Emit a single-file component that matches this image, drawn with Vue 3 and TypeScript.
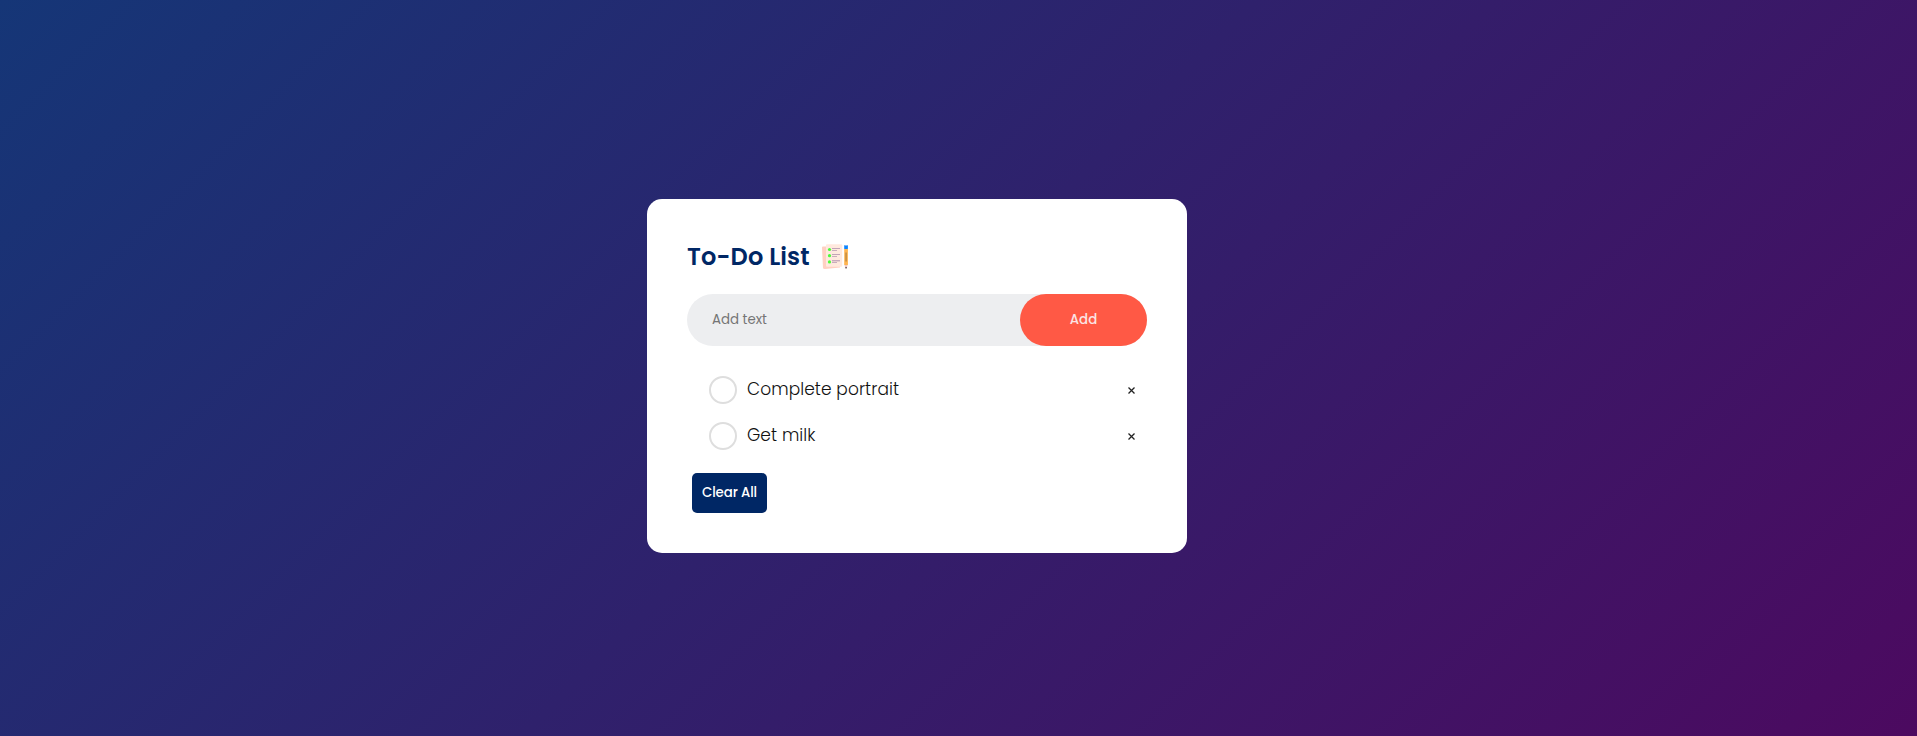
<script setup lang="ts">
import { ref } from 'vue'

interface Task {
  id: number
  text: string
  done: boolean
}

const draft = ref('')
const nextId = ref(3)
const tasks = ref<Task[]>([
  { id: 1, text: 'Complete portrait', done: false },
  { id: 2, text: 'Get milk', done: false },
])

function addTask(): void {
  const text = draft.value.trim()
  if (!text) return
  tasks.value.push({ id: nextId.value++, text, done: false })
  draft.value = ''
}

function removeTask(id: number): void {
  tasks.value = tasks.value.filter((task) => task.id !== id)
}

function clearAll(): void {
  tasks.value = []
}
</script>

<template>
  <main class="page">
    <section class="card">
      <h2 class="title">
        <span class="title-text">To-Do List</span>
        <svg class="title-icon" viewBox="0 0 27 26" aria-hidden="true">
          <path d="M0 3.5Q0 2.5 1 2.5H5V22H18V23.6L3 25Q1 25 1 24Z" fill="#ffd0c2" />
          <rect x="4" y="0.3" width="16.2" height="22.4" rx="1" fill="#ffe9de" />
          <g fill="#4dfb3a">
            <circle cx="7.5" cy="5.5" r="1.6" />
            <circle cx="7.5" cy="11.7" r="1.6" />
            <circle cx="7.5" cy="17.9" r="1.6" />
          </g>
          <g fill="#c2a5b8">
            <rect x="10" y="4" width="8" height="1" />
            <rect x="10" y="6" width="5" height="0.9" />
            <rect x="10" y="10" width="8" height="1" />
            <rect x="10" y="12" width="5" height="0.9" />
            <rect x="10" y="16.1" width="8" height="1.3" />
            <rect x="10" y="18.1" width="5" height="0.9" />
          </g>
          <rect x="22.2" y="1" width="3.7" height="4" rx="0.6" fill="#0a84ff" />
          <rect x="22.2" y="1" width="3.7" height="1" rx="0.5" fill="#7db8f5" />
          <rect x="22.2" y="5" width="3.7" height="16" fill="#ffb44f" />
          <rect x="23.6" y="8.5" width="0.9" height="9" fill="#96703e" />
          <path d="M22.4 21H25.7L24.5 24.5H23.6Z" fill="#efc9c4" />
          <rect x="23.5" y="23" width="1.1" height="1.4" fill="#30242c" />
        </svg>
      </h2>

      <form class="entry" @submit.prevent="addTask">
        <input v-model="draft" class="entry-input" type="text" placeholder="Add text" />
        <button class="entry-button" type="submit">Add</button>
      </form>

      <ul class="tasks">
        <li v-for="task in tasks" :key="task.id" class="task">
          <button
            class="check"
            :class="{ done: task.done }"
            type="button"
            aria-label="Toggle task"
            @click="task.done = !task.done"
          ></button>
          <span class="task-text" :class="{ struck: task.done }">{{ task.text }}</span>
          <button class="remove" type="button" aria-label="Remove task" @click="removeTask(task.id)">
            <svg viewBox="0 0 7 7" aria-hidden="true"><path d="M0.5 0.5L6.5 6.5M6.5 0.5L0.5 6.5" /></svg>
          </button>
        </li>
      </ul>

      <button class="clear" type="button" @click="clearAll">Clear All</button>
    </section>
  </main>
</template>

<style>
body {
  margin: 0;
}
</style>

<style scoped>
.page,
.page * {
  box-sizing: border-box;
}

.page {
  min-height: 100vh;
  padding-top: 199px;
  background: linear-gradient(135deg, #153677, #4e085f) 0 0 / calc(100% + 60px) calc(100% + 40px) no-repeat;
  font-family: Poppins, Inter, 'Open Sans', sans-serif;
}

.card {
  width: 540px;
  height: 354px;
  margin-left: 647px;
  padding: 40px;
  border-radius: 15px;
  background: #fff;
}

.title {
  display: flex;
  height: 35px;
  margin: 0 0 20px;
  color: #002765;
  font-size: 24px;
  font-weight: 600;
  letter-spacing: 0.13px;
  line-height: 36px;
}

.title-text {
  width: 135px;
  white-space: nowrap;
}

.title-icon {
  width: 27px;
  height: 26px;
  margin-top: 5px;
}

.entry {
  display: flex;
  height: 52px;
  margin: 0 0 25px;
  border-radius: 30px;
  background: #edeef0;
}

.entry-input {
  flex: 1;
  min-width: 0;
  padding: 0 0 0 25px;
  border: 0;
  outline: 0;
  background: transparent;
  color: #222;
  font: 400 13.333px Poppins, Inter, sans-serif;
}

.entry-input::placeholder {
  color: #757575;
  opacity: 1;
}

.entry-button {
  width: 127px;
  padding: 0;
  border: 0;
  border-radius: 40px;
  background: #ff5945;
  color: #fbe4e4;
  font: 500 13.333px Poppins, Inter, sans-serif;
  cursor: pointer;
}

.tasks {
  margin: 0 0 10px;
  padding: 0;
  list-style: none;
}

.task {
  display: flex;
  align-items: center;
  height: 46px;
  padding: 0 8px 0 22px;
}

.check {
  width: 28px;
  height: 28px;
  margin-top: -8px;
  padding: 0;
  border: 2px solid #dedede;
  border-radius: 50%;
  background: #fff;
  cursor: pointer;
}

.check.done {
  border-color: #ff5945;
  background: #ff5945;
}

.task-text {
  flex: 1;
  margin: -10px 0 0 10px;
  color: #111;
  font-size: 17px;
  font-weight: 300;
  letter-spacing: 0.08px;
  line-height: 26px;
}

.struck {
  color: #555;
  text-decoration: line-through;
}

.remove {
  display: flex;
  align-items: center;
  justify-content: center;
  width: 15px;
  height: 15px;
  margin-top: -7px;
  padding: 0;
  border: 0;
  background: transparent;
  cursor: pointer;
}

.remove svg {
  width: 7px;
  height: 7px;
  fill: none;
  stroke: #222;
  stroke-width: 1.3;
}

.clear {
  width: 75px;
  height: 40px;
  margin-left: 5px;
  padding: 0;
  border: 0;
  border-radius: 5px;
  background: #002765;
  color: #fff;
  font: 500 13.333px Poppins, Inter, sans-serif;
  letter-spacing: -0.12px;
  white-space: nowrap;
  cursor: pointer;
}
</style>
